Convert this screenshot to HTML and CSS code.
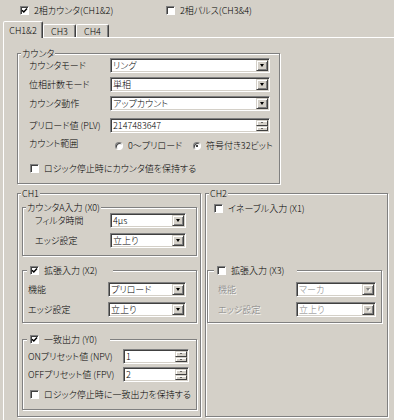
FILE: index.html
```html
<!DOCTYPE html>
<html lang="ja">
<head>
<meta charset="utf-8">
<link rel="stylesheet" href="styles.css">
</head>
<body>
<div class="top">
  <label class="chk top-a"><span class="box"><svg viewBox="0 0 7 7" width="7" height="7"><path d="M1 3.2 L2.8 5 L6 1.6" fill="none" stroke="#000" stroke-width="1.5"/></svg></span>2相カウンタ(CH1&amp;2)</label>
  <label class="chk"><span class="box"></span>2相パルス(CH3&amp;4)</label>
</div>
<div class="tabs">
  <div class="tab sel">CH1&amp;2</div>
  <div class="tab t3">CH3</div>
  <div class="tab t4">CH4</div>
</div>
<div class="panel">
  <div class="group g-counter">
    <span class="gtitle">カウンタ</span>
    <div class="row"><span class="lbl l-counter">カウンタモード</span><div class="combo c-wide"><span class="val">リング</span><span class="btn"><i class="arr"></i></span></div></div>
    <div class="row"><span class="lbl l-counter">位相計数モード</span><div class="combo c-wide"><span class="val">単相</span><span class="btn"><i class="arr"></i></span></div></div>
    <div class="row r-last"><span class="lbl l-counter">カウンタ動作</span><div class="combo c-wide"><span class="val">アップカウント</span><span class="btn"><i class="arr"></i></span></div></div>
    <div class="row"><span class="lbl l-counter">プリロード値 (PLV)</span><div class="combo c-wide"><span class="val">2147483647</span><span class="sbtn"><span class="sb"><i class="sarr up"></i></span><span class="sb"><i class="sarr dn"></i></span></span></div></div>
    <div class="rrow">
      <span class="lbl l-range">カウント範囲</span>
      <label class="rad r1"><span class="radio"></span>0〜プリロード</label>
      <label class="rad"><span class="radio on"></span>符号付き32ビット</label>
    </div>
    <label class="chk c-hold"><span class="box"></span>ロジック停止時にカウンタ値を保持する</label>
  </div>

  <div class="chrow">
    <div class="group g-ch1">
      <span class="gtitle">CH1</span>
      <div class="group g-a">
        <span class="gtitle">カウンタA入力 (X0)</span>
        <div class="row r5"><span class="lbl l-a">フィルタ時間</span><div class="combo c-a"><span class="val">4μs</span><span class="btn"><i class="arr"></i></span></div></div>
        <div class="row r5"><span class="lbl l-a">エッジ設定</span><div class="combo c-a"><span class="val">立上り</span><span class="btn"><i class="arr"></i></span></div></div>
      </div>
      <div class="group g-x2">
        <label class="gtitle gchk t-x2"><span class="box"><svg viewBox="0 0 7 7" width="7" height="7"><path d="M1 3.2 L2.8 5 L6 1.6" fill="none" stroke="#000" stroke-width="1.5"/></svg></span>拡張入力 (X2)</label>
        <div class="row r5"><span class="lbl l-x2">機能</span><div class="combo c-x2"><span class="val">プリロード</span><span class="btn"><i class="arr"></i></span></div></div>
        <div class="row r5"><span class="lbl l-x2">エッジ設定</span><div class="combo c-x2"><span class="val">立上り</span><span class="btn"><i class="arr"></i></span></div></div>
      </div>
      <div class="group g-y0">
        <label class="gtitle gchk t-y0"><span class="box"><svg viewBox="0 0 7 7" width="7" height="7"><path d="M1 3.2 L2.8 5 L6 1.6" fill="none" stroke="#000" stroke-width="1.5"/></svg></span>一致出力 (Y0)</label>
        <div class="row r3"><span class="lbl l-y0">ONプリセット値 (NPV)</span><div class="combo c-y0"><span class="val">1</span><span class="sbtn"><span class="sb"><i class="sarr up"></i></span><span class="sb"><i class="sarr dn"></i></span></span></div></div>
        <div class="row r3"><span class="lbl l-y0">OFFプリセット値 (FPV)</span><div class="combo c-y0"><span class="val">2</span><span class="sbtn"><span class="sb"><i class="sarr up"></i></span><span class="sb"><i class="sarr dn"></i></span></span></div></div>
        <label class="chk c-hold2"><span class="box"></span>ロジック停止時に一致出力を保持する</label>
      </div>
    </div>

    <div class="group g-ch2">
      <span class="gtitle">CH2</span>
      <label class="chk c-enable"><span class="box"></span>イネーブル入力 (X1)</label>
      <div class="group g-x3">
        <label class="gtitle gchk t-x3"><span class="box"></span>拡張入力 (X3)</label>
        <div class="row r5"><span class="lbl l-x3 dis">機能</span><div class="combo c-x3 dcombo"><span class="val">マーカ</span><span class="btn"><i class="arr"></i></span></div></div>
        <div class="row r5"><span class="lbl l-x3 dis">エッジ設定</span><div class="combo c-x3 dcombo"><span class="val">立上り</span><span class="btn"><i class="arr"></i></span></div></div>
      </div>
    </div>
  </div>
</div>
</body>
</html>
```

FILE: styles.css
```css
* { box-sizing: border-box; margin: 0; padding: 0; }
html, body { width: 394px; height: 420px; overflow: hidden; }
body {
  background: #d4d0c8;
  font-family: "Noto Sans CJK JP", "Noto Sans", sans-serif;
  font-size: 9px;
  font-weight: 300;
  line-height: 11px;
  font-feature-settings: "palt";
  color: #000;
}

/* top checkboxes */
.top { display: flex; height: 21px; padding: 5px 0 0 20px; }
.top-a { width: 146px; }
.chk { display: flex; align-items: center; gap: 5px; height: 11px; white-space: nowrap; }
.box {
  flex: none; width: 9px; height: 9px; background: #fff;
  border: 1px solid; border-color: #808080 #fff #fff #808080;
  box-shadow: inset 1px 1px #404040;
  display: flex; align-items: center; justify-content: center;
}
.box svg { display: block; }

/* tabs */
.tabs { display: flex; align-items: flex-end; height: 16px; padding-left: 3px; position: relative; z-index: 1; }
.tab {
  height: 13px; border: 1px solid; border-bottom: none;
  border-color: #fff #404040 transparent #fff;
  box-shadow: inset -1px 0 #808080;
  border-radius: 2px 2px 0 0;
  padding-top: 1px; text-align: center; white-space: nowrap;
}
.tab.sel { width: 40px; height: 17px; margin-bottom: -1px; background: #d4d0c8; padding-top: 3px; }
.t3 { width: 33px; }
.t4 { width: 33px; }

/* panel */
.panel {
  margin-left: 3px; width: 400px; height: 400px;
  border-top: 1px solid #fff; border-left: 1px solid #fff;
  padding: 15px 0 0 13px;
}

/* group boxes */
.group {
  position: relative; flex: none;
  border: 1px solid #808080;
  box-shadow: inset 1px 1px #fff, 1px 1px #fff;
}
.gtitle {
  position: absolute; top: -6px; left: 3px;
  background: #d4d0c8; padding: 0 1px; height: 11px; white-space: nowrap;
}
.gchk { display: flex; align-items: center; gap: 5px; padding-left: 3px; }

.g-counter { width: 263px; height: 131px; padding: 4px 0 0 11px; }
.row { display: flex; align-items: center; height: 15px; margin-bottom: 4px; }
.r-last { margin-bottom: 7px; }
.r5 { margin-bottom: 5px; }
.r3 { margin-bottom: 3px; }
.lbl { flex: none; white-space: nowrap; }
.l-counter { width: 81px; }
.l-range { width: 86px; }
.l-a { width: 75px; }
.l-x2 { width: 80px; }
.l-y0 { width: 95px; }
.l-x3 { width: 78px; }

.rrow { display: flex; align-items: flex-start; height: 12px; margin-top: 5px; }
.rad { display: flex; align-items: center; gap: 5px; margin-top: 3px; height: 9px; white-space: nowrap; }
.r1 { width: 78px; }
.radio {
  flex: none; width: 8px; height: 8px; border-radius: 50%; background: #fff;
  border: 1px solid; border-color: #808080 #fff #fff #808080;
  box-shadow: inset 1px 1px #404040;
  display: flex; align-items: center; justify-content: center;
}
.radio.on::after { content: ""; width: 2px; height: 2px; background: #000; border-radius: 1px; }
.c-hold { margin: 13px 0 0 1px; }

/* combo / spin */
.combo {
  flex: none; display: flex; height: 15px; background: #fff;
  border: 1px solid; border-color: #808080 #fff #fff #808080;
  box-shadow: inset 1px 1px #404040, inset -1px -1px #d4d0c8;
  padding: 1px;
}
.c-wide { width: 160px; }
.c-a { width: 76px; }
.c-x2 { width: 78px; }
.c-y0 { width: 66px; }
.c-x3 { width: 80px; }
.val { flex: 1; padding-left: 1px; line-height: 11px; white-space: nowrap; overflow: hidden; }
.btn {
  flex: none; width: 12px; height: 11px; background: #d4d0c8;
  border: 1px solid; border-color: #d4d0c8 #404040 #404040 #d4d0c8;
  box-shadow: inset 1px 1px #fff, inset -1px -1px #808080;
  display: flex; align-items: center; justify-content: center;
}
.arr { width: 0; height: 0; border-left: 2.5px solid transparent; border-right: 2.5px solid transparent; border-top: 3px solid #000; }
.sbtn { flex: none; width: 12px; height: 11px; display: flex; flex-direction: column; }
.sb {
  flex: 1; background: #d4d0c8;
  border: 1px solid; border-color: #d4d0c8 #404040 #404040 #d4d0c8;
  box-shadow: inset 1px 1px #fff;
  display: flex; align-items: center; justify-content: center;
}
.sarr { width: 0; height: 0; border-left: 1.5px solid transparent; border-right: 1.5px solid transparent; }
.sarr.up { border-bottom: 1.5px solid #000; }
.sarr.dn { border-top: 1.5px solid #000; }

/* CH1/CH2 */
.chrow { display: flex; gap: 4px; margin-top: 9px; }
.g-ch1 { width: 184px; height: 224px; padding: 13px 0 0 4px; }
.g-a { width: 175px; height: 49px; padding: 5px 0 0 12px; }
.g-x2 { width: 175px; height: 53px; margin-top: 14px; padding: 11px 0 0 5px; }
.t-x2 { left: 4px; width: 86px; }
.g-y0 { width: 175px; height: 71px; margin-top: 16px; padding: 9px 0 0 5px; }
.t-y0 { left: 4px; width: 83px; }
.c-hold2 { margin: 7px 0 0 2px; }

.g-ch2 { width: 183px; height: 224px; }
.c-enable { margin: 9px 0 0 8px; }
.g-x3 { width: 175px; height: 53px; margin: 56px 0 0 1px; padding: 11px 0 0 10px; }
.t-x3 { left: 6px; width: 83px; }
.dis { color: #808080; text-shadow: 1px 1px #fff; }
.dcombo .val { color: #808080; }
.dcombo .arr { border-top-color: #808080; filter: drop-shadow(1px 1px 0 #fff); }
```
